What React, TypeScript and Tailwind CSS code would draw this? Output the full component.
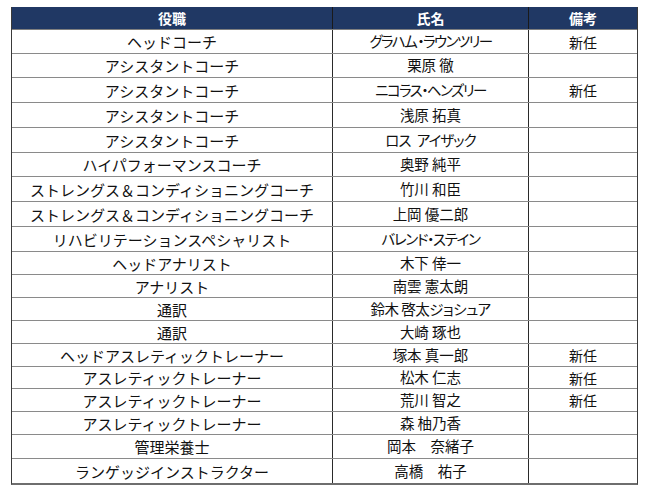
const rows = [
  { role: 'ヘッドコーチ', name: 'グラハム\u2009・ラウンツリー', note: '新任', h: 'h-[24px]', kana: 'tracking-[-1.6px]' },
  { role: 'アシスタントコーチ', name: '栗原 徹', note: '', h: 'h-[24px]', kana: '' },
  { role: 'アシスタントコーチ', name: 'ニコラス・ヘンズリー', note: '新任', h: 'h-[25px]', kana: 'tracking-[-1.6px]' },
  { role: 'アシスタントコーチ', name: '浅原 拓真', note: '', h: 'h-[25px]', kana: '' },
  { role: 'アシスタントコーチ', name: 'ロス\u2002アイザック', note: '', h: 'h-[25px]', kana: 'tracking-[-1px]' },
  { role: 'ハイパフォーマンスコーチ', name: '奥野 純平', note: '', h: 'h-[24px]', kana: '' },
  { role: 'ストレングス＆コンディショニングコーチ', name: '竹川 和臣', note: '', h: 'h-[25px]', kana: '' },
  { role: 'ストレングス＆コンディショニングコーチ', name: '上岡 優二郎', note: '', h: 'h-[25px]', kana: '' },
  { role: 'リハビリテーションスペシャリスト', name: 'バレンド・ステイン', note: '', h: 'h-[25px]', kana: 'tracking-[-1.3px]' },
  { role: 'ヘッドアナリスト', name: '木下 倖一', note: '', h: 'h-[23px]', kana: '' },
  { role: 'アナリスト', name: '南雲 憲太朗', note: '', h: 'h-[23px]', kana: '' },
  { role: '通訳', name: '鈴木 啓太ジョシュア', note: '', h: 'h-[23px]', kana: 'tracking-[-0.5px]' },
  { role: '通訳', name: '大崎 琢也', note: '', h: 'h-[23px]', kana: '' },
  { role: 'ヘッドアスレティックトレーナー', name: '塚本 真一郎', note: '新任', h: 'h-[23px]', kana: '' },
  { role: 'アスレティックトレーナー', name: '松木 仁志', note: '新任', h: 'h-[22px]', kana: '' },
  { role: 'アスレティックトレーナー', name: '荒川 智之', note: '新任', h: 'h-[23px]', kana: '' },
  { role: 'アスレティックトレーナー', name: '森 柚乃香', note: '', h: 'h-[23px]', kana: '' },
  { role: '管理栄養士', name: '岡本　奈緒子', note: '', h: 'h-[24px]', kana: '' },
  { role: 'ランゲッジインストラクター', name: '高橋　祐子', note: '', h: 'h-[24px]', kana: '' },
];

export default function App() {
  return (
    <div className="w-[650px] h-[494px] bg-white pt-[7px] pl-[11px] font-['Noto_Sans_CJK_JP',sans-serif] text-[#111]">
      <div className="w-[627px] border-l border-r border-[#3a3a3a] border-b-2 border-b-[#6e6e6e]">
        {/* header */}
        <div className="flex h-[23px] bg-[#203864] text-white font-bold text-[14px] leading-none border-b border-[#7f7f7f]">
          <div className="w-[320px] flex items-center justify-center">役職</div>
          <div className="w-[196px] flex items-center justify-center border-l border-[#1a1a1a]">氏名</div>
          <div className="flex-1 flex items-center justify-center border-l border-[#1a1a1a]">備考</div>
        </div>
        {rows.map((r, i) => (
          <div
            key={i}
            className={`flex ${r.h} leading-none ${i < rows.length - 1 ? 'border-b border-[#8a8a8a]' : ''}`}
          >
            <div className="w-[320px] flex items-center justify-center text-[15px]">{r.role}</div>
            <div className={`w-[196px] flex items-center justify-center border-l border-[#2a2a2a] text-[14.5px] [font-feature-settings:'palt'] ${r.kana}`}>
              {r.name}
            </div>
            <div className="flex-1 flex items-center justify-center border-l border-[#2a2a2a] text-[14px]">
              {r.note}
            </div>
          </div>
        ))}
      </div>
    </div>
  );
}
